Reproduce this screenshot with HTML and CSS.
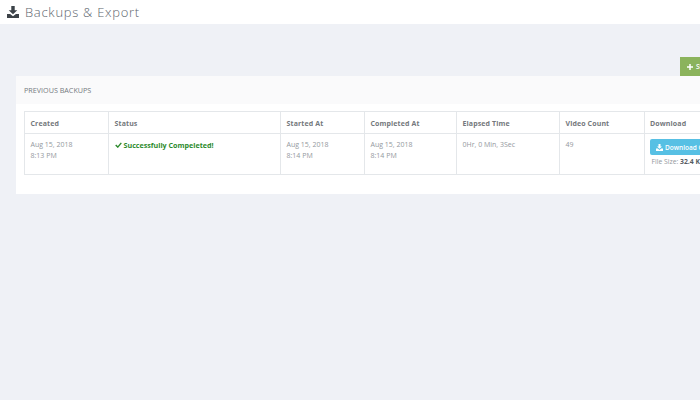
FILE: index.html
```html
<!DOCTYPE html>
<html lang="en">
<head>
<meta charset="utf-8">
<title>Backups &amp; Export</title>
<link rel="stylesheet" href="styles.css">
</head>
<body>
<header class="topbar">
  <svg class="title-icon" viewBox="0 0 14 14" aria-hidden="true"><path d="M5 0h4v5h3L7 9.6 2 5h3z"/><path d="M0 9.2h3.6L7 12l3.4-2.8H14V14H0z"/></svg>
  <h1>Backups &amp; Export</h1>
</header>
<main class="page">
  <div class="actions">
    <button class="btn-start"><svg class="plus" viewBox="0 0 8 8" aria-hidden="true"><path d="M3 0h2v3h3v2H5v3H3V5H0V3h3z"/></svg>Start New Backup</button>
  </div>
  <section class="card">
    <div class="card-head">PREVIOUS BACKUPS</div>
    <div class="card-body">
      <table>
        <thead>
          <tr><th class="c1">Created</th><th class="c2">Status</th><th class="c3">Started At</th><th class="c4">Completed At</th><th class="c5">Elapsed Time</th><th class="c6">Video Count</th><th class="c7">Download</th></tr>
        </thead>
        <tbody>
          <tr>
            <td>Aug 15, 2018<br>8:13 PM</td>
            <td class="ok"><svg class="check" viewBox="0 0 10 8" aria-hidden="true"><path d="M1 4l3 3 5-6" /></svg>Successfully Compeleted!</td>
            <td>Aug 15, 2018<br>8:14 PM</td>
            <td>Aug 15, 2018<br>8:14 PM</td>
            <td>0Hr, 0 Min, 3Sec</td>
            <td>49</td>
            <td class="dl-cell">
              <button class="btn-dl"><svg class="dl" viewBox="0 0 14 14" aria-hidden="true"><path d="M5 0h4v5h3L7 9.6 2 5h3z"/><path d="M0 9.2h3.6L7 12l3.4-2.8H14V14H0z"/></svg>Download CSV File</button>
              <div class="size">File Size: <b>32.4 KB</b></div>
            </td>
          </tr>
        </tbody>
      </table>
    </div>
  </section>
</main>
</body>
</html>
```
FILE: styles.css
```css
html, body { margin: 0; height: 100%; }
body {
  width: 700px;
  height: 400px;
  overflow: hidden;
  background: #eff1f6;
  font-family: "Open Sans", sans-serif;
  color: #76838f;
}
.topbar {
  height: 24px;
  background: #fff;
  display: flex;
  align-items: center;
  padding-left: 7px;
  gap: 6px;
  margin-bottom: 33px;
}
.title-icon { width: 12px; height: 12px; fill: #3c4248; margin-top: -1px; }
h1 {
  margin: 0;
  font-size: 13px;
  font-weight: 300;
  letter-spacing: .72px;
  color: #5c656d;
  white-space: nowrap;
}
.page { width: 860px; }
.actions { display: flex; height: 19px; padding-left: 680px; }
.btn-start {
  width: 110px;
  height: 19px;
  border: 0;
  padding: 0 0 0 7px;
  background: #8bb35c;
  color: #fff;
  font: 600 7px "Open Sans", sans-serif;
  display: flex;
  align-items: center;
  gap: 3px;
  white-space: nowrap;
}
.plus { width: 6px; height: 6px; fill: #fff; }
.card {
  margin-left: 16px;
  width: 830px;
  height: 118px;
  background: #fff;
}
.card-head {
  height: 27px;
  padding-bottom: 1px;
  background: #fafafb;
  display: flex;
  align-items: center;
  padding-left: 8px;
  font-size: 7.2px;
  color: #757b81;
}
.card-body { padding: 7px 8px 0; }
table {
  border-collapse: collapse;
  table-layout: fixed;
  width: 780px;
  font-size: 7px;
}
th, td {
  border: 1px solid #e4e7ea;
  text-align: left;
  padding: 0 5.5px;
  box-sizing: border-box;
}
th { height: 22px; font-weight: 700; color: #74787c; letter-spacing: .12px; padding-top: 1px; }
td { height: 41px; vertical-align: top; padding-top: 6px; line-height: 10.5px; color: #94999e; }
.c1 { width: 84px; }
.c2 { width: 172px; }
.c3 { width: 84px; }
.c4 { width: 92px; }
.c5 { width: 103px; }
.c6 { width: 85px; }
.c7 { width: 160px; padding-left: 5px; }
td.ok { color: #2c8a2c; font-size: 7.15px; font-weight: 700; white-space: nowrap; }
.check { width: 7px; height: 6px; fill: none; stroke: #2c8a2c; stroke-width: 2; margin-right: 2px; }
td.dl-cell { padding: 5px 0 0 5px; }
.btn-dl {
  display: flex;
  align-items: center;
  gap: 2px;
  width: 100px;
  height: 16px;
  padding: 0 0 0 6px;
  border: 0;
  border-radius: 2px;
  background: #57c0e4;
  color: #fff;
  font: 600 6.5px "Open Sans", sans-serif;
  white-space: nowrap;
}
.dl { width: 7px; height: 7px; fill: #fff; }
.size { font-size: 6.8px; margin: 2px 0 0 1.5px; line-height: 10px; white-space: nowrap; }
.size b { color: #555c62; }
```
